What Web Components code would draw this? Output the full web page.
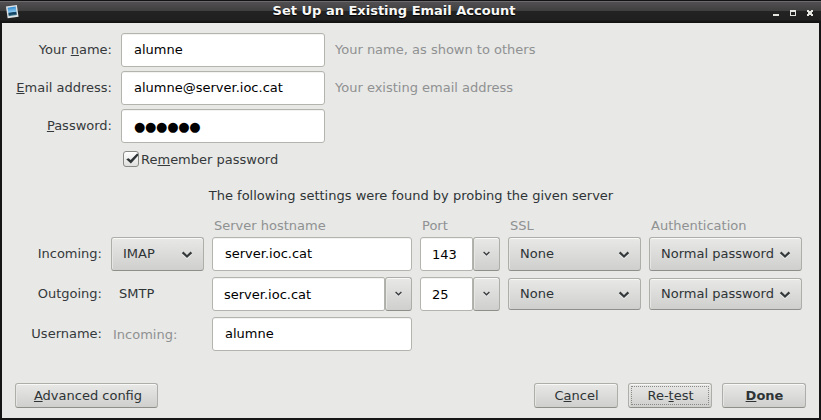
<!DOCTYPE html>
<html lang="en">
<head>
<meta charset="utf-8">
<title>Set Up an Existing Email Account</title>
<style>
html,body{margin:0;height:100%;overflow:hidden}
body{font:13px/16px "DejaVu Sans",sans-serif;color:#2e3436}
</style>
</head>
<body>
<account-dialog></account-dialog>
<script>
const define = (name, markup, setup) => {
  const t = document.createElement('template');
  t.innerHTML = markup;
  customElements.define(name, class extends HTMLElement {
    constructor() {
      super();
      this.attachShadow({ mode: 'open' }).append(t.content.cloneNode(true));
    }
    connectedCallback() { if (setup) setup(this); }
  });
};
const mnemonic = `::slotted(u){text-decoration:underline 1px;text-underline-offset:1px;text-decoration-skip-ink:none}`;

define('title-bar', `
<style>
:host{display:flex;align-items:center;height:23px;box-sizing:border-box;padding:0 6px;color:#fff;
 background:linear-gradient(#121214 0 1px,#6c6a6c 1px 2px,#514f51 2px,#403f40 11px,#232323 11px,#202020 20px,#151515 21px,#111 23px)}
.side{width:50px;height:20px;display:flex;align-items:center}
.title{flex:1;text-align:center;font-weight:bold;line-height:20px;height:21px;text-shadow:0 1px 1px #000;white-space:nowrap;padding-right:33px;color:#f8f8f6}
.right svg{margin-top:2px}
</style>
<div class="side"><svg width="14" height="16" viewBox="0 0 14 16">
<defs><linearGradient id="s" x1="0" y1="0" x2="0" y2="1"><stop offset="0" stop-color="#2f8bd0"/><stop offset=".55" stop-color="#8cc8ee"/><stop offset=".65" stop-color="#164a70"/><stop offset=".8" stop-color="#12405f"/><stop offset="1" stop-color="#4f8ba0"/></linearGradient></defs>
<g transform="rotate(-8 6 8)"><rect x="0.8" y="1.7" width="11" height="12" fill="#dfe3e6"/><rect x="2.2" y="3.1" width="8.2" height="8.6" fill="url(#s)"/></g></svg></div>
<div class="title"><slot></slot></div>
<div class="side right"><svg width="50" height="8" viewBox="0 0 50 8" shape-rendering="crispEdges" fill="#e4e4e1">
<path d="M8 5h6v2h-6z"/><path fill-rule="evenodd" d="M25 1h6v6h-6zM26 3v3h4v-3z"/>
<path d="M42 1h2v1h2v-1h2v2h-1v2h1v2h-2v-1h-2v1h-2v-2h1v-2h-1z"/></svg></div>`);

define('field-label', `
<style>
:host{display:block;text-align:right;white-space:nowrap;color:#35393b}
:host([muted]){text-align:left;color:#8f9192}
${mnemonic}
</style><slot></slot>`);

define('text-input', `
<style>
:host{display:block;box-sizing:border-box;height:34px;padding:8px 0 8px 12px;border:1px solid #b4b4af;border-radius:3px;background:#fff;color:#000;
 box-shadow:inset 0 1px 0 #f3f3f2;white-space:nowrap;line-height:16px}
:host([secret]){letter-spacing:-.3px}
</style><slot></slot>`);

const face = `border:1px solid #adada9;border-bottom-color:#8e8e8b;border-radius:3px;background:linear-gradient(#e8e8e7,#cfcfcd);box-shadow:inset 0 1px 0 #f8f8f7,inset 1px 0 0 #e6e6e4`;

define('drop-select', `
<style>
:host{display:flex;align-items:center;justify-content:space-between;box-sizing:border-box;height:34px;padding:0 10px 0 11px;white-space:nowrap;${face}}
:host([short]){height:32px}
svg{margin-top:1px}
</style><span><slot></slot></span>
<svg width="12" height="8" viewBox="0 0 12 8" fill="none"><path d="M1.8 2.5L6 6.6l4.2-4.1" stroke="#f5f5f4" stroke-width="2"/><path d="M1.6 1.4L6 5.5l4.4-4.1" stroke="#34393b" stroke-width="2.2"/></svg>`);

define('combo-box', `
<style>
:host{display:flex;height:34px}
text-input{flex:1;padding-left:11px;padding-top:9px;border-radius:3px 2px 2px 3px}
.b{width:27px;box-sizing:border-box;display:flex;align-items:center;justify-content:center;${face}}
</style><text-input><slot></slot></text-input>
<span class="b"><svg width="7" height="6" viewBox="0 0 7 6" fill="none"><path d="M.8 2.2l2.7 2.6 2.7-2.6" stroke="#f8f8f7"/><path d="M.6 1.1l2.9 2.7L6.4 1.1" stroke="#34393b" stroke-width="1.3"/></svg></span>`);

define('check-box', `
<style>
:host{display:flex;align-items:center;gap:2px;color:#35393b}
svg{margin-top:-1px}
span{margin-top:1px}
${mnemonic}
</style>
<svg width="16" height="16" viewBox="0 0 16 16"><defs><linearGradient id="c" x1="0" y1="0" x2="0" y2="1"><stop offset="0" stop-color="#fff"/><stop offset="1" stop-color="#dededc"/></linearGradient></defs>
<rect x=".5" y=".5" width="15" height="15" rx="2.5" fill="url(#c)" stroke="#888a86"/><path d="M3.2 8.3L5.6 7.2 7.6 9 13.8 2.8H15V4.8L7.9 12.6z" fill="#2e3436"/></svg><span><slot></slot></span>`);

define('push-button', `
<style>
:host{display:flex;align-items:center;justify-content:center;box-sizing:border-box;position:relative;width:84px;height:25px;padding-left:1px;white-space:nowrap;${face}}
:host([wide]){width:143px;padding-left:3px}
:host([strong]){font-weight:bold}
:host([focused])::after{content:"";position:absolute;inset:2px;border:1px dotted #888a86;border-radius:1px}
${mnemonic}
</style><span><slot></slot></span>`);

define('identity-form', `
<style>
:host{display:grid;grid-template-columns:110px 213px 1fr;row-gap:4px;align-items:center}
text-input{margin-left:9px;width:204px}
text-input[secret]{padding-top:9px}
[muted]{padding-left:10px}
check-box{grid-column:2;margin:4px 0 0 11px}
</style>
<field-label>Your <u>n</u>ame:</field-label><text-input>alumne</text-input><field-label muted>Your name, as shown to others</field-label>
<field-label><u>E</u>mail address:</field-label><text-input>alumne@server.ioc.cat</text-input><field-label muted>Your existing email address</field-label>
<field-label><u>P</u>assword:</field-label><text-input secret>●●●●●●</text-input><span></span>
<check-box>Re<u>m</u>ember password</check-box>`);

define('server-form', `
<style>
:host{display:grid;grid-template-columns:84px 93px 200px 80px 133px 153px;grid-template-rows:13px 34px 34px 34px;gap:6px 8px;align-items:center;padding-left:17px}
field-label{padding-right:1px}
field-label[muted]{padding-left:2px}
.head{align-self:start}
.plain{padding-left:8px}
</style>
<span></span><span></span><field-label class="head" muted>Server hostname</field-label><field-label class="head" muted>Port</field-label><field-label class="head" muted>SSL</field-label><field-label class="head" muted>Authentication</field-label>
<field-label>Incoming:</field-label><drop-select>IMAP</drop-select><text-input>server.ioc.cat</text-input><combo-box>143</combo-box><drop-select>None</drop-select><drop-select>Normal password</drop-select>
<field-label>Outgoing:</field-label><span class="plain">SMTP</span><combo-box>server.ioc.cat</combo-box><combo-box>25</combo-box><drop-select short>None</drop-select><drop-select short>Normal password</drop-select>
<field-label>Username:</field-label><field-label muted style="padding-top:2px">Incoming:</field-label><text-input>alumne</text-input>`);

define('account-dialog', `
<style>
:host{display:flex;flex-direction:column;width:821px;height:420px;background:#151516}
main{flex:1;display:flex;flex-direction:column;margin:0 2px 2px;background:#e8e8e6;padding:10px 0 10px;box-sizing:border-box}
.status{text-align:center;padding:20px 0 14px 1px}
server-form{width:760px}
footer{display:flex;gap:10px;margin-top:auto;padding:0 13px}
footer :first-child{margin-right:auto}
</style>
<title-bar>Set Up an Existing Email Account</title-bar>
<main>
<identity-form></identity-form>
<div class="status">The following settings were found by probing the given server</div>
<server-form></server-form>
<footer><push-button wide><u>A</u>dvanced config</push-button><push-button>C<u>a</u>ncel</push-button><push-button focused>Re-<u>t</u>est</push-button><push-button strong><u>D</u>one</push-button></footer>
</main>`);
</script>
</body>
</html>
